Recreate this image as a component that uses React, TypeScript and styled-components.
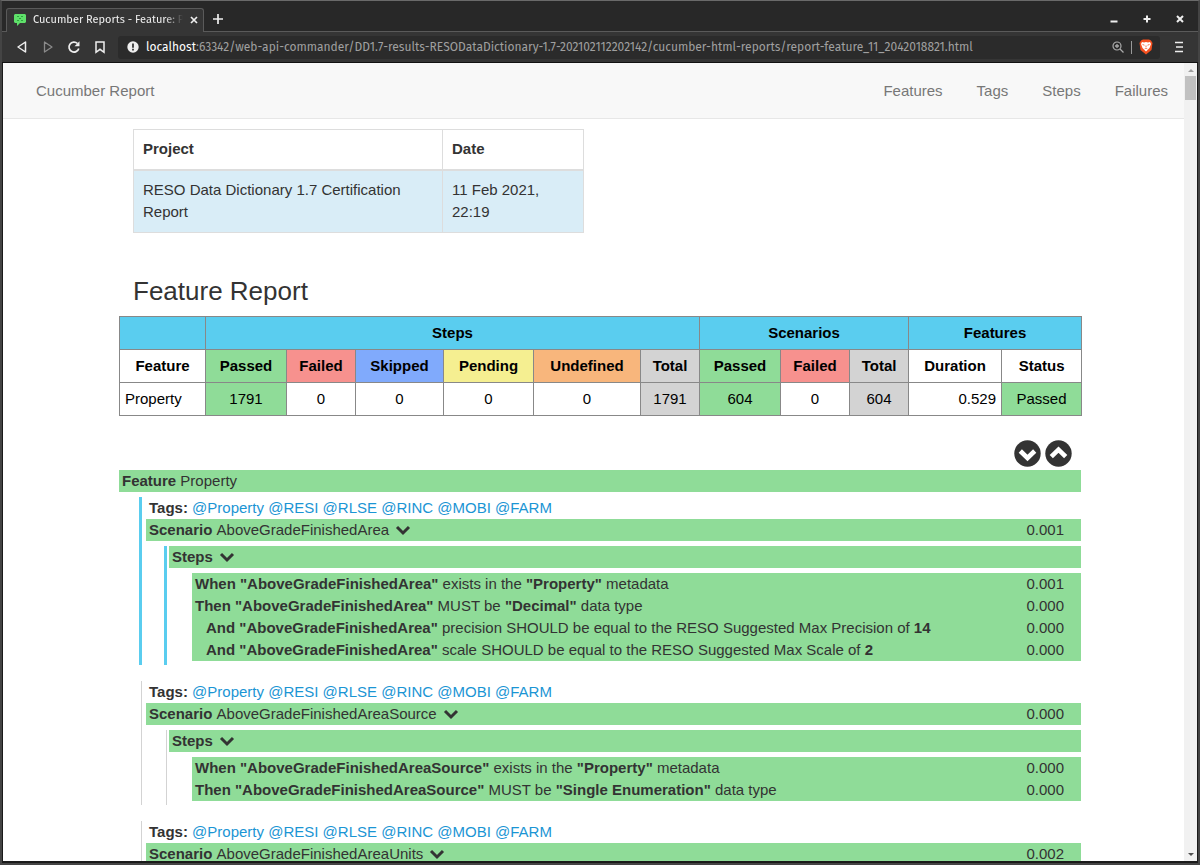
import React from "react";
import styled, { createGlobalStyle, css } from "styled-components";

const Global = createGlobalStyle`
  * { box-sizing: border-box; }
  html, body { margin: 0; }
  body { background: #444; color: #333; font: 15px/22px "Liberation Sans", Arial, sans-serif; }
  button { border: 0; padding: 0; background: none; color: inherit; font: inherit; cursor: pointer; display: inline-flex; align-items: center; justify-content: center; }
  a { text-decoration: none; }
  svg { display: block; flex: none; }
`;

const uiFont = `"Fira Sans", Roboto, sans-serif`;

const Window = styled.div`
  display: flex;
  flex-direction: column;
  height: 100vh;
  background: #353535;
  border: 2px solid #444;
  border-top: 1px solid #6a6a6a;
  overflow: hidden;
`;

const TabStrip = styled.header`
  display: flex;
  align-items: flex-end;
  height: 31px;
  flex: none;
  padding: 0 10px 0 4px;
  background: #282828;
  border-bottom: 1px solid #5a5a5a;
  color: #eee;
  font: 11px/16px ${uiFont};
`;

const Tab = styled.div`
  display: flex;
  align-items: center;
  width: 198px;
  height: 24px;
  margin-bottom: -1px;
  padding: 0 1px 2px 7px;
  gap: 7px;
  background: #353535;
  border: 1px solid #5a5a5a;
  border-bottom: 0;
  border-radius: 3px 3px 0 0;
`;

const TabTitle = styled.span`
  flex: 1;
  margin-right: -4px;
  overflow: hidden;
  white-space: nowrap;
  mask-image: linear-gradient(90deg, #000 88%, transparent);
`;

const StripButton = styled.button`
  width: 16px;
  height: 24px;
`;

const NewTab = styled(StripButton)`
  margin-left: 6px;
`;

const WindowControls = styled.div`
  display: flex;
  gap: 17px;
  margin-left: auto;
`;

const Toolbar = styled.div`
  display: flex;
  align-items: center;
  flex: none;
  height: 31px;
  padding: 0 11px 0 12px;
  background: #353535;
  border-bottom: 1px solid #111;
  color: #eee;
`;

const NavButtons = styled.nav`
  display: flex;
  gap: 10px;
  margin-right: 10px;
`;

const ToolButton = styled.button<{ $dim?: boolean }>`
  width: 16px;
  height: 22px;
  color: ${(p) => (p.$dim ? "#8a8a8a" : "#eee")};
`;

const AddressBar = styled.div`
  display: flex;
  align-items: center;
  flex: 1;
  min-width: 0;
  height: 23px;
  padding: 0 7px 0 9px;
  gap: 7px;
  margin-right: 11px;
  border-radius: 3px;
  background: #2b2b2b;
`;

const Url = styled.div`
  flex: 1;
  overflow: hidden;
  white-space: nowrap;
  color: #a0a0a0;
  font: 12px/20px ${uiFont};
  span { color: #fff; }
`;

const Divider = styled.span`
  width: 1px;
  height: 13px;
  background: #999;
`;

const Viewport = styled.div`
  display: flex;
  flex: 1;
  min-height: 0;
  background: #fff;
  border: solid #1a1a1a;
  border-width: 0 1px 2px;
`;

const Page = styled.div`
  flex: 1;
  min-width: 0;
  overflow: hidden;
`;

const Scrollbar = styled.div`
  display: flex;
  flex-direction: column;
  align-items: center;
  width: 13px;
  flex: none;
  background: #f1f1f1;
`;

const ScrollArrow = styled.button`
  width: 13px;
  height: 13px;
`;

const Thumb = styled.div`
  width: 11px;
  height: 24px;
  background: #c1c1c1;
  margin-bottom: auto;
`;

const Navbar = styled.nav`
  display: flex;
  align-items: center;
  height: 56px;
  padding: 0 16px 0 33px;
  gap: 34px;
  background: #f8f8f8;
  border-bottom: 1px solid #e7e7e7;
  a { color: #777; }
  a:first-child { margin-right: auto; }
`;

const Content = styled.main`
  padding: 10px 103px 0 116px;
`;

const InfoTable = styled.table`
  width: 450px;
  margin-left: 14px;
  table-layout: fixed;
  border-collapse: collapse;
  th, td { padding: 8px 9px 9px; border: 1px solid #ddd; text-align: left; vertical-align: top; }
  th { border-bottom-width: 2px; }
  td { background: #d9edf7; }
`;

const Title = styled.h2`
  margin: 43px 0 10px 14px;
  font-size: 26px;
  line-height: 30px;
  font-weight: 400;
`;

const tones = {
  head: "#5acdef",
  passed: "#8fdc98",
  failed: "#f7918e",
  skipped: "#80aafc",
  pending: "#f5ef91",
  undefined: "#f8b67c",
  total: "#d3d3d3",
  plain: "#fff",
};
type Tone = keyof typeof tones;

const StatsTable = styled.table`
  width: 100%;
  table-layout: fixed;
  border-collapse: collapse;
  color: #000;
`;

const cell = css<{ $tone?: Tone; $align?: string }>`
  height: 33px;
  padding: 5px;
  border: 1px solid #888;
  background: ${(p) => tones[p.$tone ?? "plain"]};
  text-align: ${(p) => p.$align ?? "center"};
`;
const Th = styled.th`${cell}`;
const Td = styled.td`${cell}`;

const Toggles = styled.div`
  display: flex;
  justify-content: flex-end;
  gap: 4px;
  margin: 24px 9px 3px 0;
`;

const Bar = styled.div`
  display: flex;
  align-items: center;
  height: 22px;
  padding: 0 17px 0 3px;
  background: ${tones.passed};
  white-space: pre;
  button { width: 16px; height: 16px; margin-left: 6px; }
`;

const Time = styled.span`
  margin-left: auto;
`;

const rail = css<{ $active?: boolean }>`
  border-left: ${(p) => (p.$active ? `3px solid ${tones.head}` : "1px solid #d3d3d3")};
`;

const Scenario = styled.section<{ $active?: boolean }>`
  ${rail}
  margin: 0 0 16px ${(p) => (p.$active ? 20 : 22)}px;
  padding-left: 4px;
`;

const Tags = styled.div`
  padding-left: 3px;
  white-space: nowrap;
  a { color: #1b95d4; }
`;

const StepsBox = styled.div<{ $active?: boolean }>`
  ${rail}
  margin: 5px 0 0 ${(p) => (p.$active ? 18 : 20)}px;
  padding: 0 0 4px 2px;
`;

const StepList = styled.div`
  margin: 5px 0 0 23px;
`;

const Step = styled(Bar)<{ $nested?: boolean }>`
  padding-left: ${(p) => (p.$nested ? 14 : 3)}px;
`;

const ScenarioGroup = styled.div`
  margin-top: 5px;
`;

const Chevron = () => (
  <svg width="16" height="12" viewBox="0 0 16 12">
    <path d="M2 3 8 9 14 3" fill="none" stroke="#333" strokeWidth="3" />
  </svg>
);

const CircleChevron = ({ up }: { up?: boolean }) => (
  <svg width="27" height="27" viewBox="0 0 27 27">
    <circle cx="13.5" cy="13.5" r="13.2" fill="#333" />
    <path d={up ? "M6.3 16.7 13.5 9.7 20.7 16.7" : "M6.3 11 13.5 18 20.7 11"} fill="none" stroke="#fff" strokeWidth="4.6" />
  </svg>
);

const stroke = { fill: "none", stroke: "currentColor", strokeWidth: 1.7 };

type Part = string | { b: string };
interface StepData { nested?: boolean; parts: Part[]; time: string }
interface ScenarioData { name: string; time: string; active?: boolean; steps: StepData[] }

const scenarios: ScenarioData[] = [
  {
    name: "AboveGradeFinishedArea", time: "0.001", active: true,
    steps: [
      { parts: [{ b: 'When "AboveGradeFinishedArea"' }, " exists in the ", { b: '"Property"' }, " metadata"], time: "0.001" },
      { parts: [{ b: 'Then "AboveGradeFinishedArea"' }, " MUST be ", { b: '"Decimal"' }, " data type"], time: "0.000" },
      { nested: true, parts: [{ b: 'And "AboveGradeFinishedArea"' }, " precision SHOULD be equal to the RESO Suggested Max Precision of ", { b: "14" }], time: "0.000" },
      { nested: true, parts: [{ b: 'And "AboveGradeFinishedArea"' }, " scale SHOULD be equal to the RESO Suggested Max Scale of ", { b: "2" }], time: "0.000" },
    ],
  },
  {
    name: "AboveGradeFinishedAreaSource", time: "0.000",
    steps: [
      { parts: [{ b: 'When "AboveGradeFinishedAreaSource"' }, " exists in the ", { b: '"Property"' }, " metadata"], time: "0.000" },
      { parts: [{ b: 'Then "AboveGradeFinishedAreaSource"' }, " MUST be ", { b: '"Single Enumeration"' }, " data type"], time: "0.000" },
    ],
  },
  { name: "AboveGradeFinishedAreaUnits", time: "0.002", steps: [] },
];

const tags = ["@Property", "@RESI", "@RLSE", "@RINC", "@MOBI", "@FARM"];
const columns = [86, 81, 69, 88, 90, 107, 59, 81, 69, 59, 93, 80];
const labels: [string, Tone][] = [
  ["Feature", "plain"], ["Passed", "passed"], ["Failed", "failed"], ["Skipped", "skipped"],
  ["Pending", "pending"], ["Undefined", "undefined"], ["Total", "total"], ["Passed", "passed"],
  ["Failed", "failed"], ["Total", "total"], ["Duration", "plain"], ["Status", "plain"],
];
const values: [string, Tone, string?][] = [
  ["Property", "plain", "left"], ["1791", "passed"], ["0", "plain"], ["0", "plain"], ["0", "plain"],
  ["0", "plain"], ["1791", "total"], ["604", "passed"], ["0", "plain"], ["604", "total"],
  ["0.529", "plain", "right"], ["Passed", "passed"],
];

function ScenarioView({ s }: { s: ScenarioData }) {
  return (
    <Scenario $active={s.active}>
      <Tags>
        <b>Tags:</b>
        {tags.map((t) => <React.Fragment key={t}> <a href="#tags">{t}</a></React.Fragment>)}
      </Tags>
      <Bar>
        <b>Scenario </b>{s.name}
        <button aria-label="Toggle scenario"><Chevron /></button>
        <Time>{s.time}</Time>
      </Bar>
      {s.steps.length > 0 && (
        <StepsBox $active={s.active}>
          <Bar><b>Steps</b><button aria-label="Toggle steps"><Chevron /></button></Bar>
          <StepList>
            {s.steps.map((st, i) => (
              <Step key={i} $nested={st.nested}>
                <span>{st.parts.map((p, j) => (typeof p === "string" ? p : <b key={j}>{p.b}</b>))}</span>
                <Time>{st.time}</Time>
              </Step>
            ))}
          </StepList>
        </StepsBox>
      )}
    </Scenario>
  );
}

export default function App() {
  return (
    <Window>
      <Global />
      <TabStrip>
        <Tab>
          <svg width="12" height="12" viewBox="0 0 12 12">
            <path d="M1 0h10l1 1v7l-1 1H6l-3 3V9H1L0 8V1z" fill="#5fe06a" />
            <path d="M3 2h2v1H3zM7 2h2v1H7zM5 4h2v1H5zM3 6h2v1H3zM7 6h2v1H7z" fill="#2ba33d" />
          </svg>
          <TabTitle>Cucumber Reports - Feature: Property</TabTitle>
          <StripButton aria-label="Close tab">
            <svg width="8" height="8" viewBox="0 0 8 8"><path d="m1 1 6 6m0-6L1 7" {...stroke} /></svg>
          </StripButton>
        </Tab>
        <NewTab aria-label="New tab">
          <svg width="10" height="10" viewBox="0 0 10 10"><path d="M5 0v10M0 5h10" {...stroke} /></svg>
        </NewTab>
        <WindowControls>
          <StripButton aria-label="Minimize"><svg width="8" height="8" viewBox="0 0 8 8"><path d="M.5 6.5h7" {...stroke} strokeWidth="2" /></svg></StripButton>
          <StripButton aria-label="Maximize"><svg width="8" height="8" viewBox="0 0 8 8"><path d="M4 .5v7M.5 4h7" {...stroke} strokeWidth="2" /></svg></StripButton>
          <StripButton aria-label="Close"><svg width="8" height="8" viewBox="0 0 8 8"><path d="m1 1 6 6m0-6L1 7" {...stroke} strokeWidth="2" /></svg></StripButton>
        </WindowControls>
      </TabStrip>
      <Toolbar>
        <NavButtons>
          <ToolButton aria-label="Back"><svg width="14" height="14" viewBox="0 0 14 14"><path d="M10.5 2v10L3 7z" {...stroke} strokeWidth="1.5" strokeLinejoin="round" /></svg></ToolButton>
          <ToolButton aria-label="Forward" $dim><svg width="14" height="14" viewBox="0 0 14 14"><path d="M3.5 2v10L11 7z" {...stroke} strokeWidth="1.3" strokeLinejoin="round" /></svg></ToolButton>
          <ToolButton aria-label="Reload"><svg width="14" height="14" viewBox="0 0 14 14"><path d="M11.8 8.5A5 5 0 1 1 10.5 3.5" {...stroke} /><path d="M12.5 1.3v5h-5z" fill="currentColor" /></svg></ToolButton>
          <ToolButton aria-label="Bookmark"><svg width="14" height="14" viewBox="0 0 14 14"><path d="M3 2h8v10.3L7 9.3l-4 3z" {...stroke} strokeWidth="1.5" /></svg></ToolButton>
        </NavButtons>
        <AddressBar>
          <svg width="12" height="12" viewBox="0 0 12 12"><circle cx="6" cy="6" r="5.7" fill="#eee" /><path d="M6 2.5v4.2M6 7.8v1.7" stroke="#2b2b2b" strokeWidth="1.7" /></svg>
          <Url><span>localhost</span>:63342/web-api-commander/DD1.7-results-RESODataDictionary-1.7-202102112202142/cucumber-html-reports/report-feature_11_2042018821.html</Url>
          <svg width="12" height="12" viewBox="0 0 12 12" color="#aaa"><circle cx="5" cy="5" r="4" {...stroke} strokeWidth="1.2" /><path d="m8 8 3.5 3.5M5 3v4M3 5h4" {...stroke} strokeWidth="1.3" /></svg>
          <Divider />
          <svg width="14" height="16" viewBox="0 0 14 16">
            <path d="M4 .5 2 1.5.5 4l1 7L7 15.5l5.5-4.5 1-7L12 1.5l-2-1z" fill="#f4501f" />
            <path d="m3 3 2 .4L7 3l2 .4L11 3l1 2-1.5 4L7 12.5 3.5 9 2 5z" fill="#fff" />
            <path d="m3.5 5.5 2 .7M10.5 5.5l-2 .7M7 6.5V8M5.7 9.8 7 9l1.3.8" stroke="#f4501f" strokeWidth=".8" fill="none" />
          </svg>
        </AddressBar>
        <ToolButton aria-label="Menu"><svg width="10" height="12" viewBox="0 0 10 12"><path d="M1 1.5h8M2 6h7M1 10.5h8" {...stroke} /></svg></ToolButton>
      </Toolbar>
      <Viewport>
        <Page>
          <Navbar>
            <a href="#home">Cucumber Report</a>
            <a href="#features">Features</a>
            <a href="#tags">Tags</a>
            <a href="#steps">Steps</a>
            <a href="#failures">Failures</a>
          </Navbar>
          <Content>
            <InfoTable>
              <colgroup><col width="309" /><col width="141" /></colgroup>
              <thead><tr><th>Project</th><th>Date</th></tr></thead>
              <tbody><tr><td>RESO Data Dictionary 1.7 Certification Report</td><td>11 Feb 2021, 22:19</td></tr></tbody>
            </InfoTable>
            <Title>Feature Report</Title>
            <StatsTable>
              <colgroup>{columns.map((w, i) => <col key={i} width={w} />)}</colgroup>
              <thead>
                <tr><Th $tone="head" /><Th $tone="head" colSpan={6}>Steps</Th><Th $tone="head" colSpan={3}>Scenarios</Th><Th $tone="head" colSpan={2}>Features</Th></tr>
                <tr>{labels.map(([t, tone], i) => <Th key={i} $tone={tone}>{t}</Th>)}</tr>
              </thead>
              <tbody>
                <tr>{values.map(([t, tone, align], i) => <Td key={i} $tone={tone} $align={align}>{t}</Td>)}</tr>
              </tbody>
            </StatsTable>
            <Toggles>
              <button aria-label="Expand all"><CircleChevron /></button>
              <button aria-label="Collapse all"><CircleChevron up /></button>
            </Toggles>
            <Bar><b>Feature </b>Property</Bar>
            <ScenarioGroup>
              {scenarios.map((s) => <ScenarioView key={s.name} s={s} />)}
            </ScenarioGroup>
          </Content>
        </Page>
        <Scrollbar>
          <ScrollArrow aria-label="Scroll up"><svg width="6" height="4" viewBox="0 0 6 4"><path d="m0 4 3-3 3 3z" fill="#a0a0a0" /></svg></ScrollArrow>
          <Thumb />
          <ScrollArrow aria-label="Scroll down"><svg width="6" height="4" viewBox="0 0 6 4"><path d="m0 0 3 3 3-3z" fill="#505050" /></svg></ScrollArrow>
        </Scrollbar>
      </Viewport>
    </Window>
  );
}
